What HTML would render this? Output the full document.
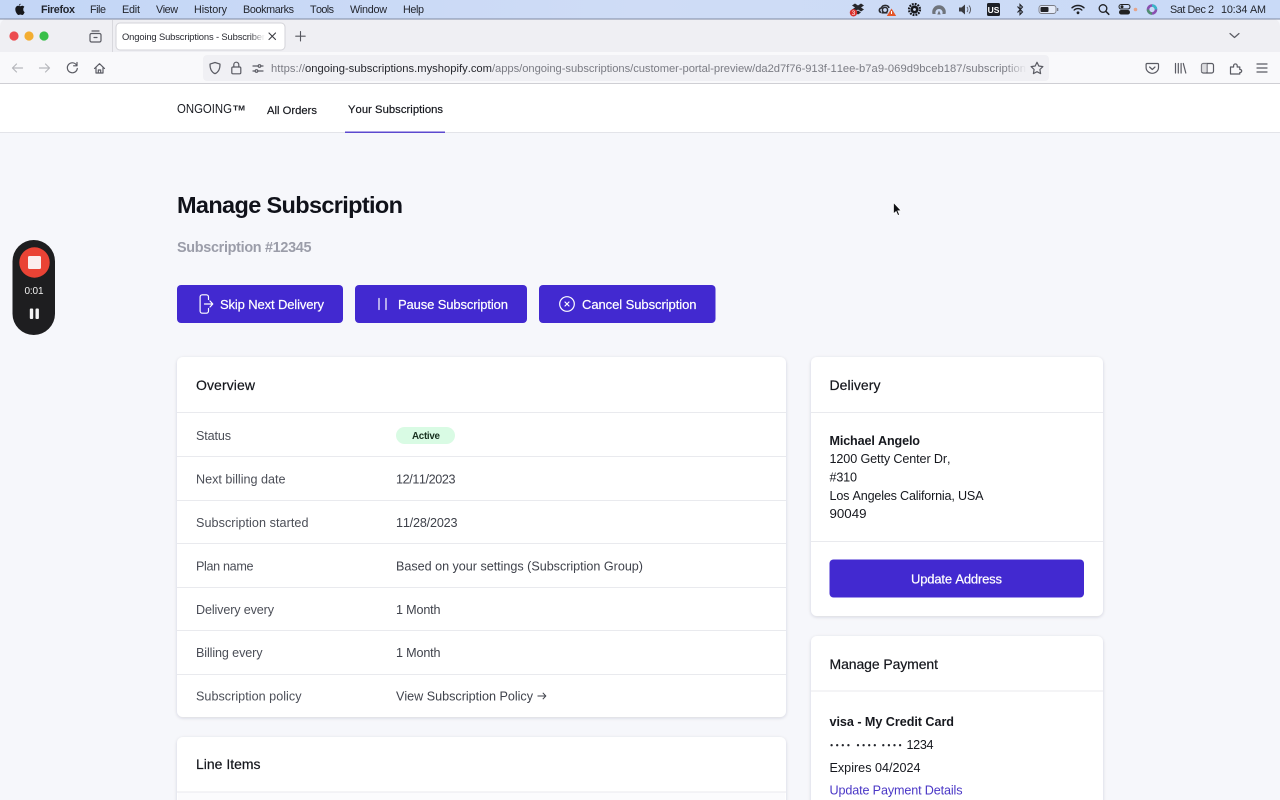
<!DOCTYPE html>
<html lang="en"><head><meta charset="utf-8"><title>Ongoing Subscriptions</title>
<style>
html,body{margin:0;padding:0;width:1280px;height:800px;overflow:hidden;background:#f6f7fb}
svg{display:block;position:absolute;left:0;top:0;filter:blur(.3px)}
text{font-family:"Liberation Sans",Arial,sans-serif;font-kerning:none}
.mb{font-size:10.8px;fill:#23262e}
.lb{font-size:12.6px;fill:#4b4e57}
.val{font-size:12.6px;fill:#3f424b}
.t{font-size:14px;fill:#14161c;stroke:#14161c;stroke-width:.2}
.d{font-size:12.6px;fill:#16181e}
.btn{font-size:13px;fill:#fff;stroke:#fff;stroke-width:.2}
.ic{fill:none;stroke:#5a5b63;stroke-width:1.2;stroke-linecap:round;stroke-linejoin:round}
.bi{fill:none;stroke:#fff;stroke-width:1.2;stroke-linecap:round;stroke-linejoin:round}
.u{font-size:11.2px;fill:#7b7c84}
</style></head><body>
<svg width="1280" height="800" viewBox="0 0 1280 800" xmlns="http://www.w3.org/2000/svg">
<defs>
<linearGradient id="mbg" x1="0" x2="1" y1="0" y2="0"><stop offset="0" stop-color="#c3d6f6"/><stop offset=".5" stop-color="#cfdcf6"/><stop offset="1" stop-color="#c9daf7"/></linearGradient>
<linearGradient id="fade" gradientUnits="userSpaceOnUse" x1="1005" x2="1027" y1="0" y2="0"><stop offset="0" stop-color="#7b7c84"/><stop offset="1" stop-color="#f0f0f4"/></linearGradient>
<linearGradient id="tabfade" gradientUnits="userSpaceOnUse" x1="250" x2="265" y1="0" y2="0"><stop offset="0" stop-color="#2b2c33"/><stop offset="1" stop-color="#ffffff"/></linearGradient>
<filter id="sh" x="-5%" y="-5%" width="110%" height="110%"><feDropShadow dx="0" dy="1" stdDeviation="1.6" flood-color="#20253a" flood-opacity=".16"/></filter>
</defs>

<!-- page -->
<rect width="1280" height="800" fill="#f6f7fb"/>

<!-- menu bar -->
<rect width="1280" height="19" fill="url(#mbg)"/>
<path d="M20.6 3.700c-.9.1-1.700.8-1.700 1.900.9 0 1.700-.9 1.700-1.900zM23.300 8.800c.1-1 .7-1.600 1.100-1.900-.6-.8-1.600-1.100-2.100-1.100-.8 0-1.500.5-2 .5s-1.300-.5-2-.5c-1.100 0-3 .9-3 3.500 0 2.800 2.100 5.700 3.300 5.700.7 0 1.100-.5 1.800-.5s1.100.5 1.800.5c1.100 0 2.100-1.800 2.400-2.900-.8-.4-1.300-1.200-1.300-2.300z" fill="#17181c"/>
<text x="41" y="13" class="mb" font-weight="bold" textLength="34">Firefox</text>
<text x="90" y="13" class="mb" textLength="16">File</text>
<text x="122" y="13" class="mb" textLength="18">Edit</text>
<text x="156" y="13" class="mb" textLength="22">View</text>
<text x="194" y="13" class="mb" textLength="33">History</text>
<text x="243" y="13" class="mb" textLength="51">Bookmarks</text>
<text x="310" y="13" class="mb" textLength="24">Tools</text>
<text x="350" y="13" class="mb" textLength="37">Window</text>
<text x="403" y="13" class="mb" textLength="21">Help</text>

<!-- status icons -->
<path d="M852 5.500l3-2 3 2 3-2 3 2-3 2 3 2-3 2-3-2-3 2-3-2 3-2zM855 12.500l3-2 3 2-3 2z" fill="#26272b"/>
<circle cx="853.500" cy="12.800" r="3.700" fill="#d9302c"/><text x="853.500" y="15" font-size="6" fill="#fff" text-anchor="middle">3</text>
<path d="M881 12.500c-2.500-1-2-4.300 .5-4.500 1-3.500 6.500-3.500 7.500 0" fill="none" stroke="#2a2b30" stroke-width="1.600"/><circle cx="885" cy="10" r="2.600" fill="none" stroke="#2a2b30" stroke-width="1.500"/><path d="M881.500 12.800h6" stroke="#2a2b30" stroke-width="1.500"/>
<path d="M891.500 8.500l4.700 7.500h-9.400z" fill="#e4572a"/><rect x="891" y="11" width="1" height="3" fill="#fff"/>
<circle cx="914.500" cy="9.500" r="4" fill="#17181c"/><circle cx="914.500" cy="9.500" r="1.400" fill="#d4dff6"/><circle cx="914.500" cy="9.500" r="5.500" fill="none" stroke="#17181c" stroke-width="2.200" stroke-dasharray="1.800 1.090"/>
<path d="M932.500 14a6.800 6.800 0 1 1 13 0h-3.200a3.600 3.600 0 1 0-6.600 0z" fill="#6f747c"/><path d="M937.300 14.500l1.700-4 1.700 4z" fill="#6f747c"/>
<path d="M959 7.500h2.500l3.500-3v10l-3.500-3H959z" fill="#3a3b40"/><path d="M967 7a4 4 0 0 1 0 5M969 5.500a6 6 0 0 1 0 8" fill="none" stroke="#55565c" stroke-width=".9"/>
<rect x="987" y="3" width="13" height="13" rx="1.500" fill="#1e2026"/><text x="993.500" y="12.800" font-size="8.500" font-weight="bold" fill="#fff" text-anchor="middle">US</text>
<path d="M1017.500 6.500l5 5.500-2.500 2.500V4.500l2.500 2.500-5 5.500" fill="none" stroke="#222328" stroke-width="1.100"/>
<rect x="1039" y="5.500" width="17" height="8" rx="2.500" fill="#e5ebf8" stroke="#7a7d86" stroke-width=".9"/><rect x="1040.500" y="7" width="8" height="5" rx="1" fill="#212226"/><rect x="1057" y="8" width="1.300" height="3" fill="#7a7d86"/>
<path d="M1072 7.800a9 9 0 0 1 12 0M1074.200 10a5.800 5.800 0 0 1 7.600 0" fill="none" stroke="#1e1f23" stroke-width="1.400" stroke-linecap="round"/><circle cx="1078" cy="12.800" r="1.400" fill="#1e1f23"/>
<circle cx="1103" cy="8.500" r="3.800" fill="none" stroke="#1e1f23" stroke-width="1.300"/><path d="M1105.800 11.300l3 3" stroke="#1e1f23" stroke-width="1.500" stroke-linecap="round"/>
<rect x="1119" y="4.500" width="11" height="4.500" rx="2.200" fill="none" stroke="#222" stroke-width="1"/><rect x="1119" y="10" width="11" height="4.500" rx="2.200" fill="#222"/><circle cx="1122" cy="6.700" r="1.500" fill="#222"/>
<circle cx="1135.500" cy="9.500" r="1.800" fill="#e5a58c"/>
<circle cx="1152" cy="9.500" r="4" fill="none" stroke="#8a4fb0" stroke-width="2.600"/><path d="M1152 5.500a4 4 0 0 1 4 4" fill="none" stroke="#39b6c8" stroke-width="2.600"/><path d="M1148 9.500a4 4 0 0 0 4 4" fill="none" stroke="#4f8f70" stroke-width="2.600"/>
<text x="1170" y="13" class="mb" textLength="44">Sat Dec 2</text>
<text x="1221" y="13" class="mb" textLength="45">10:34 AM</text>

<!-- browser chrome -->
<path d="M0 27q0-8 8-8H1272q8 0 8 8V52H0z" fill="#efeff3"/>
<path d="M0 19H1280" stroke="#7f8aa3" stroke-width="1"/>
<rect y="52" width="1280" height="31" fill="#f9f9fb"/>
<rect y="83" width="1280" height="1" fill="#cfcfd4"/>
<circle cx="14" cy="36" r="4.600" fill="#ec4b4f"/>
<circle cx="29" cy="36" r="4.600" fill="#f3ad31"/>
<circle cx="44" cy="36" r="4.600" fill="#38bf49"/>
<path d="M92 31h7" class="ic"/><rect x="90" y="33.500" width="11" height="8.500" rx="1.500" class="ic"/><path d="M94 37.500h3" class="ic"/>
<rect x="112" y="20" width="1" height="32" fill="#d8d8dd"/>
<rect x="116" y="23" width="169" height="27" rx="4" fill="#fff" stroke="#d3d3d8" stroke-width="1"/>
<text x="122" y="40" font-size="9.400" fill="url(#tabfade)" textLength="143">Ongoing Subscriptions - Subscriber</text>
<path d="M269 33l6.500 6.500M275.500 33L269 39.500" stroke="#3b3c42" stroke-width="1.100" stroke-linecap="round"/>
<path d="M300.500 31.500v9.500M295.700 36.200h9.500" stroke="#55565d" stroke-width="1.100" stroke-linecap="round"/>
<path d="M1230 33.500l4.500 4 4.500-4" class="ic"/>

<!-- toolbar left -->
<path d="M22.500 68h-10M16.500 64l-4 4 4 4" fill="none" stroke="#b6b7bc" stroke-width="1.200" stroke-linecap="round" stroke-linejoin="round"/>
<path d="M39.500 68h10M45.500 64l4 4-4 4" fill="none" stroke="#b6b7bc" stroke-width="1.200" stroke-linecap="round" stroke-linejoin="round"/>
<path d="M76.500 65a5 5 0 1 0 .8 3.500M77 62.500v3.300h-3.400" class="ic"/>
<path d="M94.500 68.500l5-4.800 5 4.800M96 67.500v5.500h7v-5.500M98.300 73v-3h2.400v3" class="ic"/>

<!-- url bar -->
<rect x="203" y="55" width="846" height="26" rx="4" fill="#f0f0f4"/>
<path d="M215 62.500l5 1.600c.1 4.500-1.500 8-5 9.600-3.500-1.600-5.100-5.100-5-9.600z" class="ic"/>
<rect x="231.800" y="67" width="9" height="6.800" rx="1.200" class="ic"/><path d="M233.800 67v-2.300a2.500 2.500 0 0 1 5 0V67" class="ic"/>
<path d="M253 66h5M261 66h2M253 71h2M258 71h5" class="ic"/><circle cx="259.500" cy="66" r="1.300" class="ic"/><circle cx="256.500" cy="71" r="1.300" class="ic"/>
<text x="271" y="72.200" class="u" textLength="34">https://</text>
<text x="305" y="72.200" class="u" style="fill:#27282e" textLength="187">ongoing-subscriptions.myshopify.com</text>
<text x="492" y="72.200" class="u" textLength="367">/apps/ongoing-subscriptions/customer-portal-preview/da2d7f76-913f-11ee-</text>
<text x="859" y="72.200" class="u" style="fill:url(#fade)" textLength="167">b7a9-069d9bceb187/subscription</text>
<path d="M1037 62.300l1.800 3.700 4.100.6-3 2.900.7 4.100-3.600-1.900-3.600 1.900.7-4.100-3-2.900 4.100-.6z" class="ic"/>

<!-- toolbar right -->
<path d="M1147 63.500h10.500a1 1 0 0 1 1 1v3a6.200 5.800 0 0 1-12.400 0v-3a1 1 0 0 1 .9-1z" class="ic"/><path d="M1149.600 67l2.700 2.500 2.700-2.500" class="ic"/>
<path d="M1175.500 63.500v9.500M1178.300 63.500v9.500M1181.100 63.500v9.500M1183.300 63.500l2.500 9.500" class="ic"/>
<rect x="1201.500" y="63.500" width="12" height="9.500" rx="1.800" class="ic"/><path d="M1207 63.500v9.500" class="ic"/><path d="M1201.500 65v7h5.500v-8.500h-5z" fill="#c9c9ce" fill-opacity=".6"/>
<path d="M1230.500 74v-7h3.100v-1.300a1.800 1.800 0 0 1 3.600 0V67h2.600v2.500h.4a1.500 1.500 0 0 1 0 3h-.4V74z" class="ic"/>
<path d="M1257 64h10M1257 68h10M1257 72h10" class="ic"/>

<!-- nav -->
<rect y="84" width="1280" height="48" fill="#fff"/>
<rect y="132" width="1280" height="1" fill="#e3e4e9"/>
<text x="177" y="113" font-size="13" fill="#1a1c22" textLength="55" lengthAdjust="spacingAndGlyphs">ONGOING</text>
<text x="233" y="110.500" font-size="7.500" fill="#1a1c22" textLength="12" lengthAdjust="spacingAndGlyphs" font-weight="bold">TM</text>
<text x="267" y="114" font-size="11.200" fill="#16181e" stroke="#16181e" stroke-width=".2" textLength="50">All Orders</text>
<text x="348" y="113" font-size="11.200" fill="#16181e" stroke="#16181e" stroke-width=".2" textLength="95">Your Subscriptions</text>
<rect x="345" y="131.500" width="100" height="1.500" fill="#5c49cf"/>

<!-- heading -->
<text x="177" y="213" font-size="23.500" font-weight="bold" fill="#10121a" textLength="226">Manage Subscription</text>
<text x="177" y="252" font-size="14.400" font-weight="bold" fill="#9b9da9" textLength="134.500">Subscription #12345</text>

<!-- buttons -->
<rect x="177" y="285" width="166" height="38" rx="4" fill="#4229d0"/>
<rect x="355" y="285" width="172" height="38" rx="4" fill="#4229d0"/>
<rect x="539" y="285" width="176.500" height="38" rx="4" fill="#4229d0"/>
<path d="M208.500 299.500v-2.500a2.200 2.200 0 0 0-2.200-2.200h-4a2.200 2.200 0 0 0-2.200 2.200v14a2.200 2.200 0 0 0 2.200 2.200h4a2.200 2.200 0 0 0 2.200-2.200v-2.500M204.500 304h8M210 301l2.800 3-2.800 3" class="bi"/>
<text x="220" y="309" class="btn" textLength="104">Skip Next Delivery</text>
<path d="M379 298.500v11M386 298.500v11" class="bi"/>
<text x="398" y="309" class="btn" textLength="110">Pause Subscription</text>
<circle cx="567" cy="304" r="7.300" class="bi"/><path d="M565 302l4 4M569 302l-4 4" class="bi"/>
<text x="582" y="309" class="btn" textLength="114.500">Cancel Subscription</text>

<!-- overview card -->
<rect x="177" y="357" width="609" height="360" rx="6" fill="#fff" filter="url(#sh)"/>
<text x="196" y="390" class="t" textLength="59">Overview</text>
<g fill="#e9eaee"><rect x="177" y="412" width="609" height="1"/><rect x="177" y="456" width="609" height="1"/><rect x="177" y="500" width="609" height="1"/><rect x="177" y="543" width="609" height="1"/><rect x="177" y="587" width="609" height="1"/><rect x="177" y="630" width="609" height="1"/><rect x="177" y="674" width="609" height="1"/></g>
<text x="196" y="440" class="lb" textLength="35">Status</text>
<rect x="396" y="427" width="59" height="17" rx="8.500" fill="#d9fbe4"/>
<text x="412" y="439" font-size="9.800" font-weight="bold" fill="#17301f" textLength="28">Active</text>
<text x="196" y="483.500" class="lb" textLength="89.500">Next billing date</text>
<text x="396" y="483.500" class="val" textLength="59.500">12/11/2023</text>
<text x="196" y="527" class="lb" textLength="112.500">Subscription started</text>
<text x="396" y="527" class="val" textLength="61.500">11/28/2023</text>
<text x="196" y="570.500" class="lb" textLength="57.500">Plan name</text>
<text x="396" y="570.500" class="val" textLength="247">Based on your settings (Subscription Group)</text>
<text x="196" y="614" class="lb" textLength="78">Delivery every</text>
<text x="396" y="614" class="val" textLength="44.500">1 Month</text>
<text x="196" y="657" class="lb" textLength="66.500">Billing every</text>
<text x="396" y="657" class="val" textLength="44.500">1 Month</text>
<text x="196" y="700.500" class="lb" textLength="105.500">Subscription policy</text>
<text x="396" y="700.500" class="val" textLength="137">View Subscription Policy</text>
<path d="M537.500 696h8M542.800 692.800l3 3.200-3 3.200" fill="none" stroke="#3f424b" stroke-width="1"/>

<!-- line items card -->
<rect x="177" y="737" width="609" height="90" rx="6" fill="#fff" filter="url(#sh)"/>
<text x="196" y="769" class="t" textLength="64.500">Line Items</text>
<rect x="177" y="791.500" width="609" height="1" fill="#e9eaee"/>
<rect x="178" y="792.500" width="607" height="8" fill="#fbfbfd"/>

<!-- delivery card -->
<rect x="811" y="357" width="292" height="259" rx="6" fill="#fff" filter="url(#sh)"/>
<text x="829.500" y="390" class="t" textLength="51">Delivery</text>
<rect x="811" y="412" width="292" height="1" fill="#e9eaee"/>
<text x="829.500" y="445" class="d" font-weight="bold" textLength="90.500">Michael Angelo</text>
<text x="829.500" y="463" class="d" textLength="121">1200 Getty Center Dr,</text>
<text x="829.500" y="481.500" class="d" textLength="27.500">#310</text>
<text x="829.500" y="500" class="d" textLength="154">Los Angeles California, USA</text>
<text x="829.500" y="518" class="d" style="font-size:13px" textLength="37" lengthAdjust="spacingAndGlyphs">90049</text>
<rect x="811" y="541" width="292" height="1" fill="#e9eaee"/>
<rect x="829.500" y="559.500" width="254.500" height="38" rx="4" fill="#4229d0"/>
<text x="911" y="583.500" class="btn" textLength="91">Update Address</text>

<!-- payment card -->
<rect x="811" y="636" width="292" height="200" rx="6" fill="#fff" filter="url(#sh)"/>
<text x="829.500" y="669" class="t" textLength="108.500">Manage Payment</text>
<rect x="811" y="690.500" width="292" height="1" fill="#e9eaee"/>
<text x="829.500" y="726" class="d" font-weight="bold" textLength="124.500">visa - My Credit Card</text>
<g fill="#23252b"><circle cx="831.600" cy="745.200" r="1.150"/><circle cx="837.200" cy="745.200" r="1.150"/><circle cx="842.800" cy="745.200" r="1.150"/><circle cx="848.400" cy="745.200" r="1.150"/><circle cx="858" cy="745.200" r="1.150"/><circle cx="863.600" cy="745.200" r="1.150"/><circle cx="869.200" cy="745.200" r="1.150"/><circle cx="874.800" cy="745.200" r="1.150"/><circle cx="883.300" cy="745.200" r="1.150"/><circle cx="888.900" cy="745.200" r="1.150"/><circle cx="894.500" cy="745.200" r="1.150"/><circle cx="900.100" cy="745.200" r="1.150"/></g>
<text x="906.500" y="749" class="d" textLength="27">1234</text>
<text x="829.500" y="772" class="d" textLength="91">Expires 04/2024</text>
<text x="829.500" y="794.500" class="d" style="fill:#4a37c6" textLength="133">Update Payment Details</text>

<!-- recorder -->
<rect x="12.500" y="240" width="42.500" height="95" rx="21.250" fill="#1e1e20"/>
<circle cx="34.500" cy="262.500" r="15.200" fill="#ea4335"/>
<rect x="28" y="256" width="13" height="13" rx="1.500" fill="#fbeeee"/>
<text x="24.500" y="294" font-size="10" fill="#f2f2f2" textLength="19">0:01</text>
<rect x="29.800" y="308.500" width="3.400" height="10.500" rx="1" fill="#f4f4f4"/>
<rect x="35.500" y="308.500" width="3.400" height="10.500" rx="1" fill="#f4f4f4"/>

<!-- cursor -->
<path d="M893.500 202.500v11.300l2.600-2.300 1.800 4 1.700-.8-1.800-3.900 3.300-.2z" fill="#101114" stroke="#fff" stroke-width=".7"/>
</svg>
</body></html>
